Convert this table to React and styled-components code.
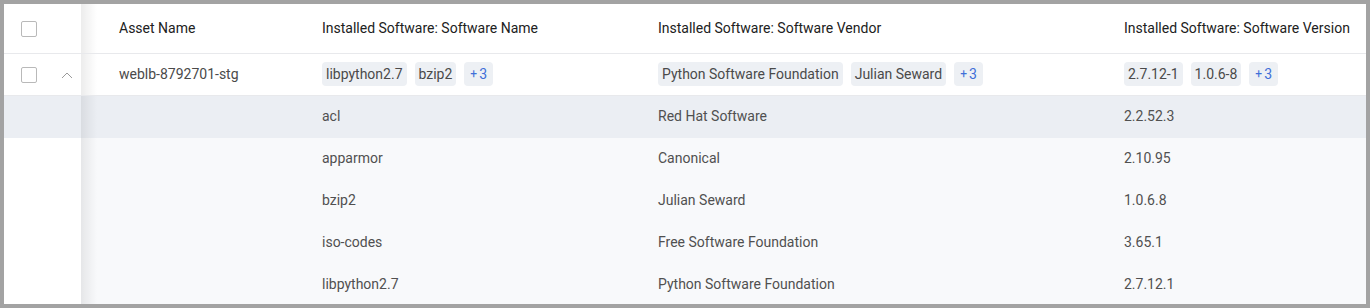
import React from "react";
import styled, { createGlobalStyle } from "styled-components";

const Global = createGlobalStyle`
  html, body { margin: 0; padding: 0; background: #a3a3a3; }
  body { font-family: Roboto, "Noto Sans", Arial, sans-serif; }
`;

const Frame = styled.div`
  width: 1370px;
  height: 308px;
  box-sizing: border-box;
  border: 4px solid #a3a3a3;
  background: #ffffff;
  overflow: hidden;
`;

const Table = styled.div`
  display: flex;
  flex-direction: column;
  width: 1362px;
`;

const Row = styled.div`
  display: grid;
  grid-template-columns: 77px 217px 336px 466px 266px;
  height: ${(p) => p.$h}px;
  box-sizing: border-box;
  background: ${(p) => p.$bg || "#ffffff"};
  border-bottom: ${(p) => (p.$line ? "1px solid #e8e9ec" : "none")};
  color: ${(p) => p.$color || "#4a4a4a"};
  font-size: 14px;
`;

const Sticky = styled.div`
  position: relative;
  display: flex;
  align-items: center;
  background: ${(p) => p.$bg || "#ffffff"};
  &::after {
    content: "";
    position: absolute;
    top: 0;
    bottom: 0;
    left: 100%;
    width: 16px;
    background: linear-gradient(to right, rgba(0, 0, 0, 0.075), rgba(0, 0, 0, 0));
    pointer-events: none;
    z-index: 1;
  }
`;

const CheckSlot = styled.div`
  width: 49px;
  padding-left: 17px;
  box-sizing: border-box;
  display: flex;
  align-items: center;
`;

const Checkbox = styled.span`
  display: block;
  width: 16px;
  height: 16px;
  box-sizing: border-box;
  border: 1px solid #b9b9b9;
  border-radius: 2px;
  background: #fff;
`;

const ExpandSlot = styled.div`
  width: 28px;
  display: flex;
  align-items: center;
  justify-content: center;
  padding-top: 1px;
`;

const Cell = styled.div`
  display: flex;
  align-items: center;
  gap: 8px;
  padding-left: ${(p) => p.$pl || 24}px;
  padding-bottom: 2px;
  min-width: 0;
  white-space: nowrap;
`;

const HeadText = styled.span`
  color: #212121;
  font-size: 14px;
`;

const Tag = styled.span`
  display: inline-flex;
  align-items: center;
  height: 24px;
  padding: 0 4px;
  border-radius: 4px;
  background: #edf0f4;
  color: #4a4a4a;
  font-size: 14px;
`;

const MoreTag = styled(Tag)`
  color: #3f6fd8;
  gap: 2px;
  padding: 0 6px 0 6px;
`;

const Plus = styled.span`
  font-size: 12px;
`;

const Chevron = () => (
  <svg width="12" height="8" viewBox="0 0 12 8" fill="none">
    <polyline points="1,7 6,2 11,7" stroke="#9a9a9a" strokeWidth="1" />
  </svg>
);

const details = [
  ["acl", "Red Hat Software", "2.2.52.3"],
  ["apparmor", "Canonical", "2.10.95"],
  ["bzip2", "Julian Seward", "1.0.6.8"],
  ["iso-codes", "Free Software Foundation", "3.65.1"],
  ["libpython2.7", "Python Software Foundation", "2.7.12.1"],
];

const More = () => (
  <MoreTag>
    <Plus>+</Plus>3
  </MoreTag>
);

export default function App() {
  return (
    <>
      <Global />
      <Frame>
        <Table>
          <Row $h={50} $line>
            <Sticky>
              <CheckSlot>
                <Checkbox />
              </CheckSlot>
            </Sticky>
            <Cell $pl={38}>
              <HeadText>Asset Name</HeadText>
            </Cell>
            <Cell>
              <HeadText>Installed Software: Software Name</HeadText>
            </Cell>
            <Cell>
              <HeadText>Installed Software: Software Vendor</HeadText>
            </Cell>
            <Cell>
              <HeadText>Installed Software: Software Version</HeadText>
            </Cell>
          </Row>
          <Row $h={42} $line>
            <Sticky>
              <CheckSlot>
                <Checkbox />
              </CheckSlot>
              <ExpandSlot>
                <Chevron />
              </ExpandSlot>
            </Sticky>
            <Cell $pl={38}>weblb-8792701-stg</Cell>
            <Cell>
              <Tag>libpython2.7</Tag>
              <Tag>bzip2</Tag>
              <More />
            </Cell>
            <Cell>
              <Tag>Python Software Foundation</Tag>
              <Tag>Julian Seward</Tag>
              <More />
            </Cell>
            <Cell>
              <Tag>2.7.12-1</Tag>
              <Tag>1.0.6-8</Tag>
              <More />
            </Cell>
          </Row>
          {details.map(([name, vendor, version], i) => (
            <Row key={name} $h={42} $bg={i === 0 ? "#ebeef3" : "#f8f9fb"} $color="#505050">
              <Sticky $bg={i === 0 ? "#ebeef3" : "#ffffff"} />
              <Cell $pl={38} />
              <Cell>{name}</Cell>
              <Cell>{vendor}</Cell>
              <Cell>{version}</Cell>
            </Row>
          ))}
        </Table>
      </Frame>
    </>
  );
}
